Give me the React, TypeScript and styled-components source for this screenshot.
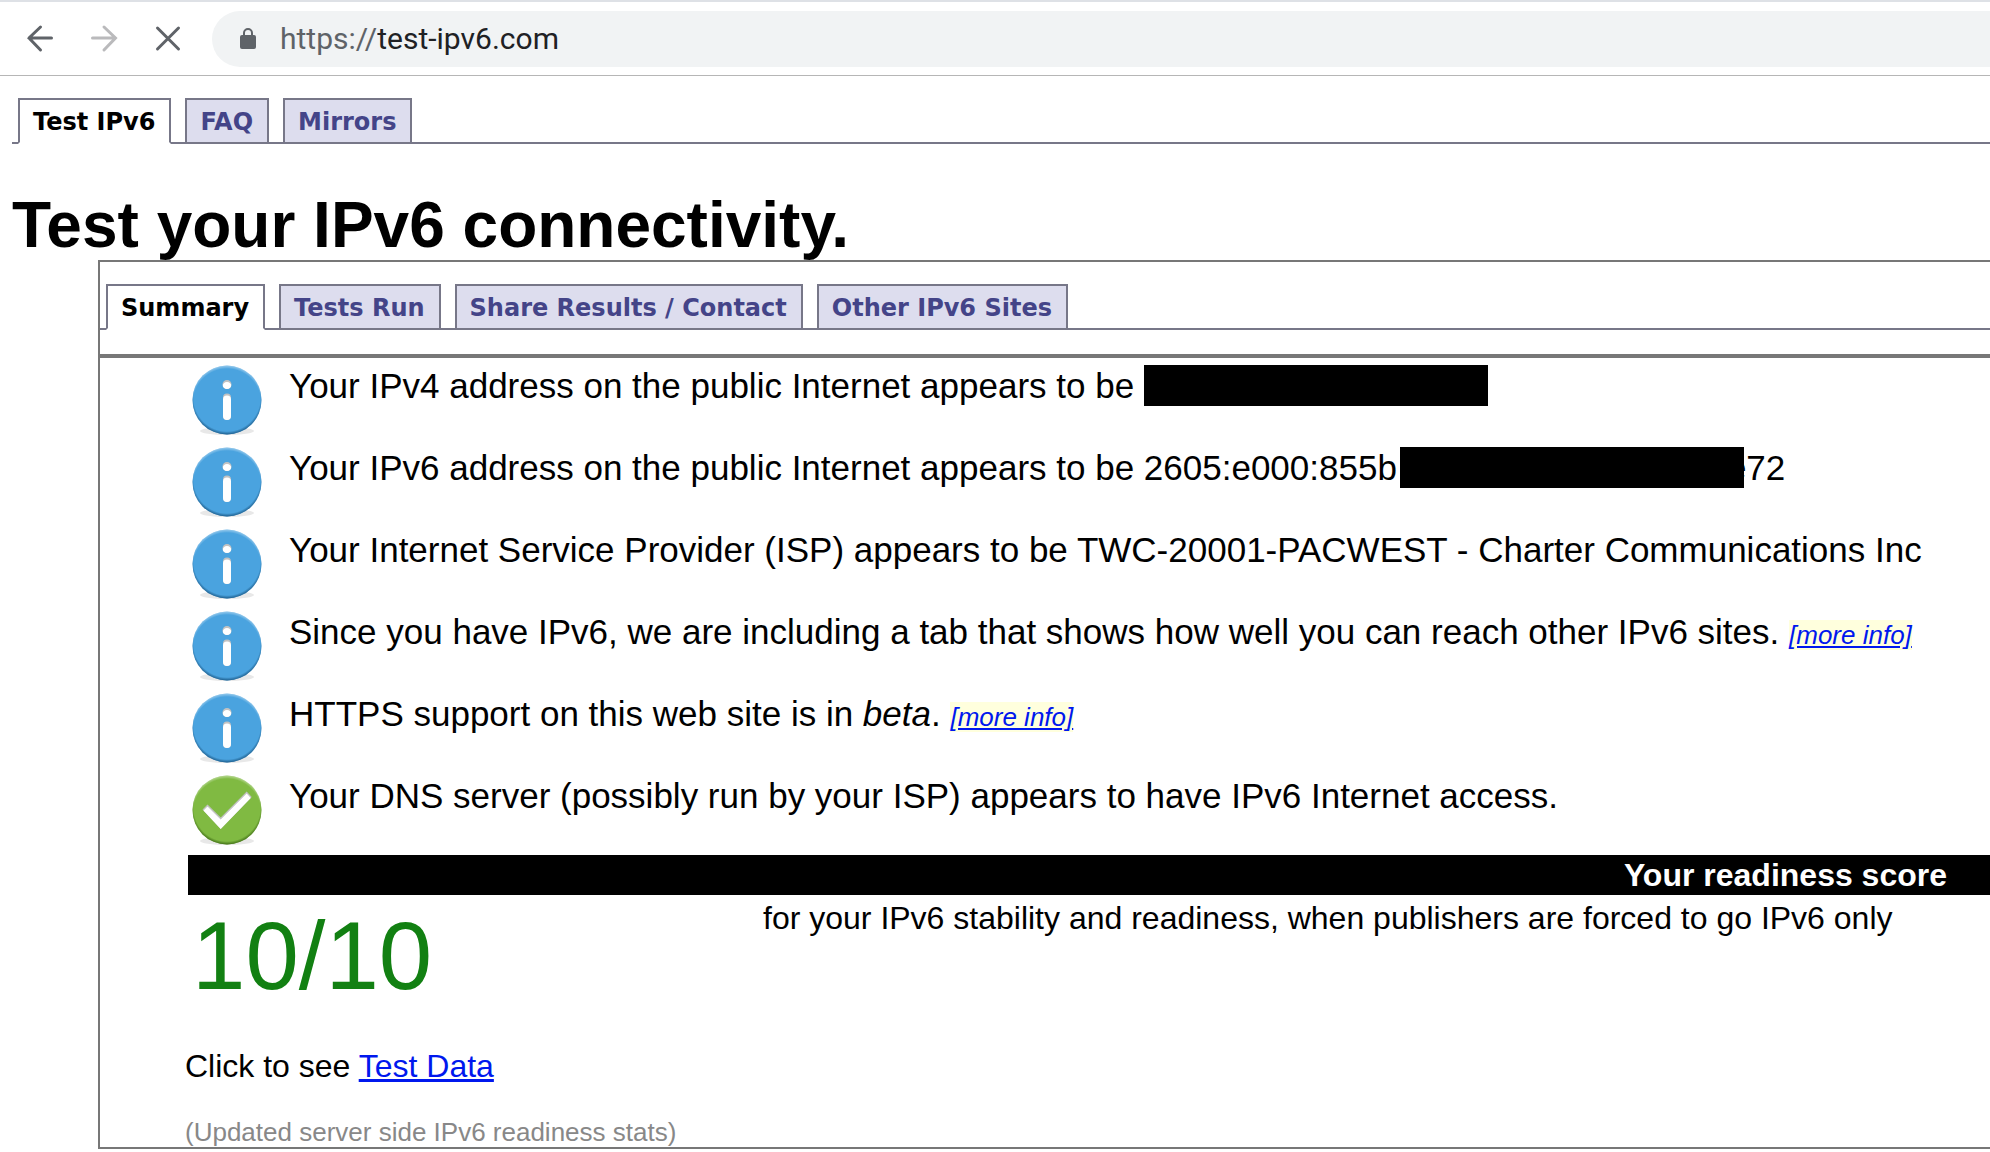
import React from 'react';
import styled, { createGlobalStyle } from 'styled-components';

const GlobalStyle = createGlobalStyle`
  * { box-sizing: border-box; }
  body {
    margin: 0;
    background: #fff;
    color: #000;
    font-family: "Liberation Sans", Arial, sans-serif;
    overflow-x: hidden;
  }
`;

const Toolbar = styled.header`
  display: flex;
  align-items: center;
  height: 76px;
  padding-left: 22px;
  border-top: 2px solid #dee1e6;
  border-bottom: 1px solid #b6b6b6;
`;

const NavButton = styled.button<{ $dim?: boolean }>`
  display: flex;
  flex: none;
  width: 64px;
  padding: 0;
  border: 0;
  background: none;
  color: ${(p) => (p.$dim ? '#bababc' : '#5f6368')};
`;

const NavIcon = styled.svg`
  width: 36px;
  height: 32px;
  fill: none;
  stroke: currentColor;
  stroke-width: 3px;
  stroke-linecap: round;
`;

const AddressBar = styled.div`
  display: flex;
  flex: 1;
  align-items: center;
  height: 56px;
  margin: 0 -40px 0 -2px;
  padding-left: 26px;
  border-radius: 28px;
  background: #f1f3f4;
  font-family: Roboto, sans-serif;
  font-size: 30px;
  line-height: 36px;
`;

const Scheme = styled.label`
  margin-left: 22px;
  color: #5f6368;
`;

const AddressInput = styled.input`
  flex: 1;
  min-width: 0;
  padding: 0;
  border: 0;
  outline: 0;
  background: none;
  color: #202124;
  font: inherit;
`;

const TabBar = styled.nav`
  display: flex;
  gap: 14px;
  padding-left: 6px;
  border-bottom: 2px solid #778;
`;

const Tab = styled.a<{ $active?: boolean }>`
  height: 46px;
  margin-bottom: -2px;
  padding: 6px 14px 6px 13px;
  border: 2px solid #778;
  border-bottom-color: ${(p) => (p.$active ? '#fff' : '#778')};
  background: ${(p) => (p.$active ? '#fff' : '#dde')};
  color: ${(p) => (p.$active ? '#000' : '#448')};
  font: bold 24px/32px Verdana, "DejaVu Sans", sans-serif;
  text-decoration: none;
  white-space: nowrap;
`;

const SiteTabs = styled.div`
  padding: 22px 0 0 12px;
`;

const Title = styled.h1`
  margin: 46px 0 0 12px;
  font-size: 64px;
  line-height: 70px;
`;

const Panel = styled.main`
  margin-left: 98px;
  border: 2px solid #777;
  border-right: 0;
`;

const PanelTabs = styled.div`
  padding: 22px 0 24px;
  border-bottom: 4px solid #777;
`;

const Results = styled.ul`
  margin: 0;
  padding: 5px 0 0 88px;
  list-style: none;
`;

const Result = styled.li`
  display: flex;
  gap: 25px;
  height: 82px;
  padding-left: 2px;
  font-size: 35px;
  line-height: 46px;
  white-space: nowrap;
`;

const Redacted = styled.span<{ $overlap?: boolean }>`
  position: relative;
  display: inline-block;
  width: 344px;
  height: 41px;
  margin: ${(p) => (p.$overlap ? '0 -17px 0 3px' : '0')};
  background: #000;
  vertical-align: -8px;
`;

const MoreInfo = styled.a`
  background: #ffd;
  color: #0018ee;
  font-size: 26px;
  font-style: italic;
`;

const Score = styled.section`
  margin-left: 88px;
`;

const ScoreHeading = styled.h2`
  margin: 0;
  padding-right: 43px;
  background: #000;
  color: #fff;
  font-size: 32px;
  line-height: 40px;
  text-align: right;
`;

const ScoreRow = styled.div`
  display: grid;
  grid-template-columns: 575px 1fr;
  height: 150px;
`;

const ScoreValue = styled.output`
  padding-left: 4px;
  color: #128012;
  font-size: 96px;
  line-height: 122px;
`;

const ScoreText = styled.p`
  margin: 0;
  font-size: 32px;
  line-height: 46px;
  white-space: nowrap;
`;

const Footer = styled.footer`
  padding-left: 85px;
`;

const TestData = styled.p`
  margin: 0;
  font-size: 32px;
  line-height: 42px;
`;

const DataLink = styled.a`
  color: #0018ee;
`;

const Stats = styled.p`
  margin: 30px 0 0;
  color: #888;
  font-size: 26px;
  line-height: 30px;
`;

const CHECK = 'M12.5 36.5l5-5 13.2 13L56.7 18.5l5 5.5L30.7 56z';
const INFO =
  'M32.5 21.5a4.5 4.5 0 1 0 9 0a4.5 4.5 0 1 0-9 0zM33 34.5a4 4 0 0 1 8 0V53a4 4 0 0 1-8 0z';

function StatusIcon({ ok }: { ok?: boolean }) {
  const id = ok ? 'ok' : 'info';
  const glyph = ok ? CHECK : INFO;
  return (
    <svg width="74" height="76" viewBox="0 0 74 76" role="img" aria-label={ok ? 'Good' : 'Info'}>
      <defs>
        <radialGradient id={`${id}-shade`} cx="0.5" cy="0.47" r="0.53">
          <stop offset="0.91" stopColor={ok ? '#35610f' : '#15507c'} stopOpacity="0" />
          <stop offset="1" stopColor={ok ? '#35610f' : '#15507c'} stopOpacity="0.85" />
        </radialGradient>
        <radialGradient id={`${id}-light`} cx="0.5" cy="0.54" r="0.54">
          <stop offset="0.91" stopColor="#fff" stopOpacity="0" />
          <stop offset="1" stopColor="#fff" stopOpacity="0.45" />
        </radialGradient>
        <clipPath id={`${id}-glyph`}>
          <path d={glyph} />
        </clipPath>
      </defs>
      <ellipse cx="37" cy="68" rx="27" ry="4" fill="#e8e8e8" />
      <circle cx="37" cy="37" r="34.5" fill={ok ? '#80ba42' : '#4aa3df'} />
      <circle cx="37" cy="37" r="34.5" fill={`url(#${id}-light)`} />
      <circle cx="37" cy="37" r="34.5" fill={`url(#${id}-shade)`} />
      <path d={glyph} fill="#c2c2c2" />
      <g clipPath={`url(#${id}-glyph)`}>
        <path d={glyph} fill="#fff" transform="translate(0 2)" />
      </g>
    </svg>
  );
}

function More() {
  return <MoreInfo href="#more">[more info]</MoreInfo>;
}

export default function App() {
  return (
    <>
      <GlobalStyle />
      <Toolbar>
        <NavButton aria-label="Back">
          <NavIcon viewBox="0 0 36 32">
            <path d="M29.5 15H7M18.5 4L7 15l11.500 12" />
          </NavIcon>
        </NavButton>
        <NavButton aria-label="Forward" $dim>
          <NavIcon viewBox="0 0 36 32">
            <path d="M6.500 15H29M18 4l11.500 11L18 27" />
          </NavIcon>
        </NavButton>
        <NavButton aria-label="Stop">
          <NavIcon viewBox="0 0 36 32">
            <path d="M7.500 5l21 21M28.500 5l-21 21" />
          </NavIcon>
        </NavButton>
        <AddressBar>
          <svg width="20" height="24" viewBox="0 0 20 24">
            <rect x="2" y="8" width="16" height="14" rx="2" fill="#5f6368" />
            <path d="M6 9V6a4 4 0 0 1 8 0v3" fill="none" stroke="#5f6368" strokeWidth="2" />
          </svg>
          <Scheme htmlFor="address">https://</Scheme>
          <AddressInput id="address" defaultValue="test-ipv6.com" />
        </AddressBar>
      </Toolbar>
      <SiteTabs>
        <TabBar>
          <Tab href="#test" $active>Test IPv6</Tab>
          <Tab href="#faq">FAQ</Tab>
          <Tab href="#mirrors">Mirrors</Tab>
        </TabBar>
      </SiteTabs>
      <Title>Test your IPv6 connectivity.</Title>
      <Panel>
        <PanelTabs>
          <TabBar>
            <Tab href="#summary" $active>Summary</Tab>
            <Tab href="#tests">Tests Run</Tab>
            <Tab href="#share">Share Results / Contact</Tab>
            <Tab href="#sites">Other IPv6 Sites</Tab>
          </TabBar>
        </PanelTabs>
        <Results>
          <Result>
            <StatusIcon />
            <span>Your IPv4 address on the public Internet appears to be <Redacted /></span>
          </Result>
          <Result>
            <StatusIcon />
            <span>Your IPv6 address on the public Internet appears to be 2605:e000:855b<Redacted $overlap />e72</span>
          </Result>
          <Result>
            <StatusIcon />
            <span>Your Internet Service Provider (ISP) appears to be TWC-20001-PACWEST - Charter Communications Inc</span>
          </Result>
          <Result>
            <StatusIcon />
            <span>Since you have IPv6, we are including a tab that shows how well you can reach other IPv6 sites. <More /></span>
          </Result>
          <Result>
            <StatusIcon />
            <span>HTTPS support on this web site is in <em>beta</em>. <More /></span>
          </Result>
          <Result>
            <StatusIcon ok />
            <span>Your DNS server (possibly run by your ISP) appears to have IPv6 Internet access.</span>
          </Result>
        </Results>
        <Score>
          <ScoreHeading>Your readiness score</ScoreHeading>
          <ScoreRow>
            <ScoreValue>10/10</ScoreValue>
            <ScoreText>for your IPv6 stability and readiness, when publishers are forced to go IPv6 only</ScoreText>
          </ScoreRow>
        </Score>
        <Footer>
          <TestData>Click to see <DataLink href="#data">Test Data</DataLink></TestData>
          <Stats>(Updated server side IPv6 readiness stats)</Stats>
        </Footer>
      </Panel>
    </>
  );
}
